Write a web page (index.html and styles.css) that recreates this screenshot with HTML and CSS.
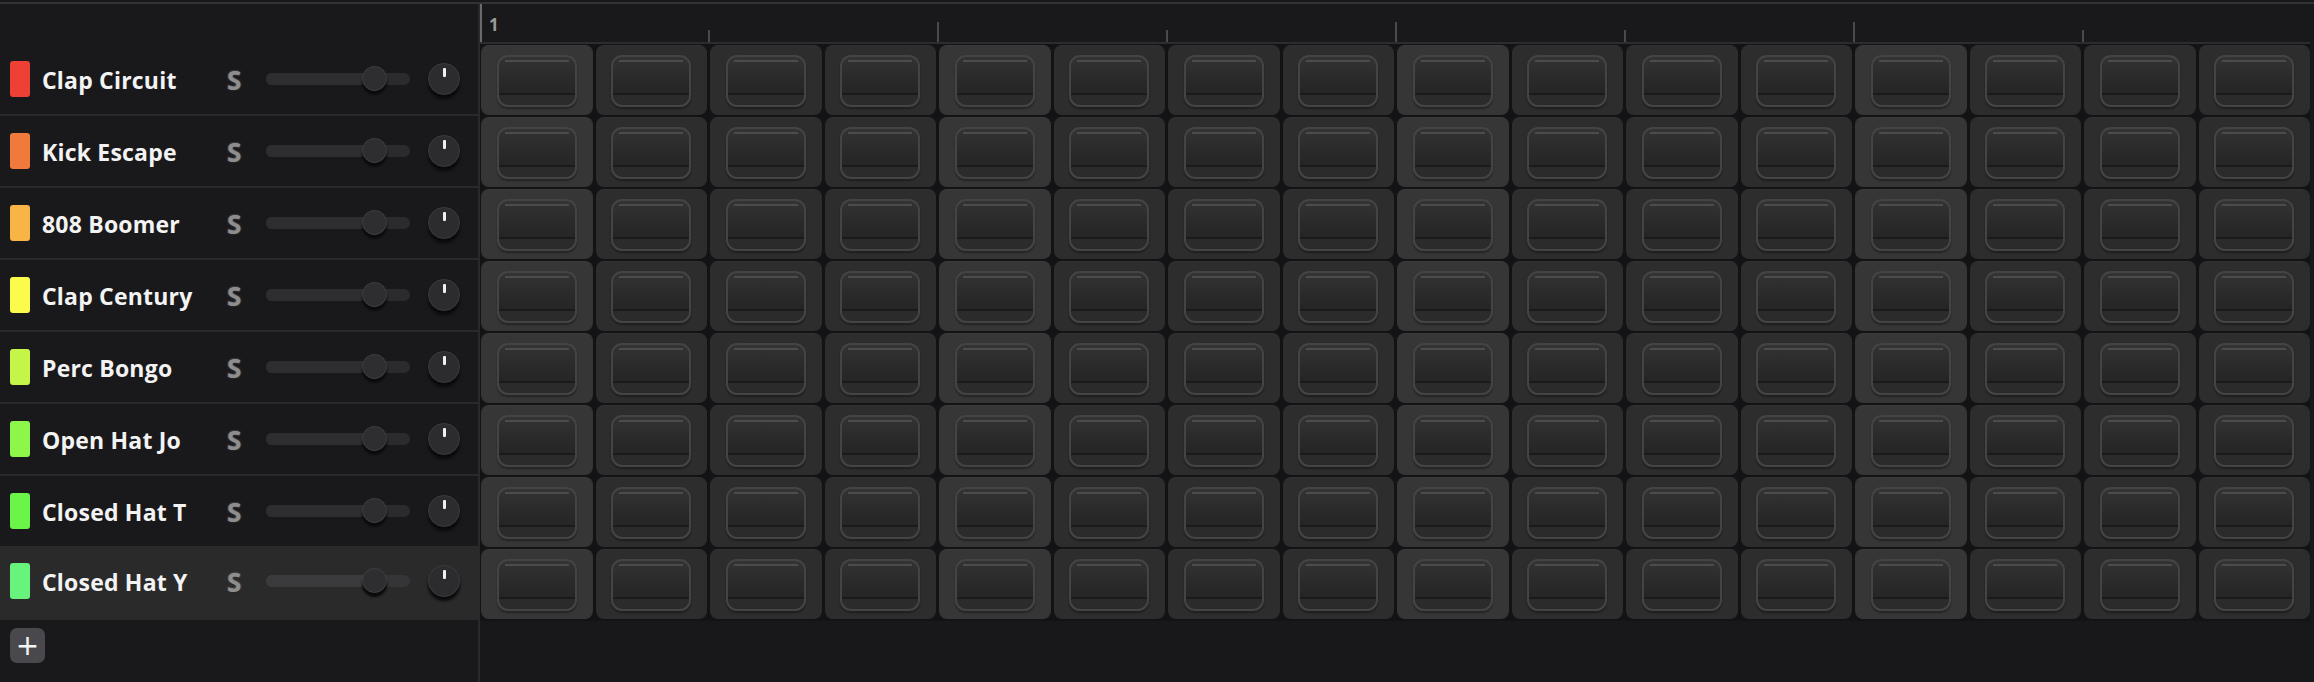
FILE: index.html
```html
<!DOCTYPE html>
<html>
<head>
<meta charset="utf-8">
<link rel="stylesheet" href="styles.css">
</head>
<body>
<div class="app">
  <aside class="sidebar">
    <div class="side-head"></div>
    <div class="tracks">
      <div class="track"><span class="chip" style="background:#ee4035"></span><span class="name">Clap Circuit</span><span class="solo">S</span><div class="slider"><div class="fill"></div><div class="thumb"></div></div><div class="pan"></div></div>
      <div class="track"><span class="chip" style="background:#f07a3c"></span><span class="name">Kick Escape</span><span class="solo">S</span><div class="slider"><div class="fill"></div><div class="thumb"></div></div><div class="pan"></div></div>
      <div class="track"><span class="chip" style="background:#f8b445"></span><span class="name">808 Boomer</span><span class="solo">S</span><div class="slider"><div class="fill"></div><div class="thumb"></div></div><div class="pan"></div></div>
      <div class="track"><span class="chip" style="background:#fbfb4c"></span><span class="name">Clap Century</span><span class="solo">S</span><div class="slider"><div class="fill"></div><div class="thumb"></div></div><div class="pan"></div></div>
      <div class="track"><span class="chip" style="background:#c6f54a"></span><span class="name">Perc Bongo</span><span class="solo">S</span><div class="slider"><div class="fill"></div><div class="thumb"></div></div><div class="pan"></div></div>
      <div class="track"><span class="chip" style="background:#8ef54b"></span><span class="name">Open Hat Jo</span><span class="solo">S</span><div class="slider"><div class="fill"></div><div class="thumb"></div></div><div class="pan"></div></div>
      <div class="track"><span class="chip" style="background:#6cf549"></span><span class="name">Closed Hat T</span><span class="solo">S</span><div class="slider"><div class="fill"></div><div class="thumb"></div></div><div class="pan"></div></div>
      <div class="track selected"><span class="chip" style="background:#68f37c"></span><span class="name">Closed Hat Y</span><span class="solo">S</span><div class="slider"><div class="fill"></div><div class="thumb"></div></div><div class="pan"></div></div>
    </div>
    <div class="add-wrap"><button class="add">+</button></div>
  </aside>
  <main class="main">
    <div class="ruler" id="ruler"></div>
    <div class="grid" id="grid"></div>
  </main>
</div>
<script src="script.js"></script>
</body>
</html>
```
FILE: script.js
```js
(function () {
  var ruler = document.getElementById('ruler');
  for (var i = 0; i < 16; i++) {
    var c = document.createElement('div');
    c.className = 'rcell';
    if (i === 0) { c.classList.add('start'); c.textContent = '1'; }
    else if (i % 4 === 0) c.classList.add('beat');
    else if (i % 2 === 0) c.classList.add('half');
    ruler.appendChild(c);
  }
  var grid = document.getElementById('grid');
  for (var r = 0; r < 8; r++) {
    for (var k = 0; k < 16; k++) {
      var p = document.createElement('div');
      p.className = 'pad' + (k % 4 === 0 ? ' accent' : '');
      var b = document.createElement('div');
      b.className = 'btn';
      p.appendChild(b);
      grid.appendChild(p);
    }
  }
})();
```
FILE: styles.css
```css
* { box-sizing: border-box; }
html, body {
  margin: 0;
  padding: 0;
  background: #18181a;
  width: 2314px;
  height: 682px;
  overflow: hidden;
  font-family: "Open Sans", "DejaVu Sans", sans-serif;
}
.app {
  display: flex;
  margin-top: 2px;
  border-top: 2px solid #323234;
  height: 680px;
}
.sidebar {
  width: 480px;
  flex: none;
  border-right: 2px solid #29292b;
  background: #19191b;
  display: flex;
  flex-direction: column;
}
.side-head { height: 40px; }
.track {
  height: 72px;
  display: flex;
  align-items: center;
  padding-left: 10px;
  border-bottom: 2px solid #2a2a2c;
}
.track.selected { background: #2a2a2b; border-bottom-color: transparent; margin-top: -2px; height: 74px; padding-bottom: 2px; }
.chip {
  width: 20px;
  height: 36px;
  border-radius: 3px;
  flex: none;
}
.name {
  margin-left: 12px;
  width: 185px;
  color: #f3f3f3;
  font-weight: 700;
  font-size: 23px;
  letter-spacing: 0.2px;
  line-height: 30px;
  padding-top: 2px;
  white-space: nowrap;
}
.solo {
  width: 39px;
  color: #8e8e8e;
  font-weight: 700;
  font-size: 26px;
  line-height: 30px;
  padding-top: 2px;
  text-shadow: 0 0 2px #8e8e8e, 0 1px 1px #000;
}
.slider {
  position: relative;
  width: 144px;
  height: 12px;
  border-radius: 6px;
  background: #2b2b2d;
}
.selected .slider { background: #353537; }
.fill {
  width: 108px;
  height: 12px;
  border-radius: 6px 0 0 6px;
  background: #2e2e30;
}
.selected .fill { background: #3b3b3d; }
.thumb {
  position: absolute;
  left: 96px;
  top: -7px;
  width: 25px;
  height: 25px;
  border-radius: 50%;
  background: #2e2e31;
  border: 1px solid #404044;
  box-shadow: 0 4px 2px #0b0b0c;
}
.pan {
  position: relative;
  margin-left: 18px;
  width: 32px;
  height: 32px;
  border-radius: 50%;
  background: #2c2c2f;
  border: 1px solid #3c3c40;
  box-shadow: 0 4px 3px #0a0a0b;
}
.pan::after {
  content: "";
  position: absolute;
  left: 13.5px;
  top: 4px;
  width: 3px;
  height: 9px;
  background: #f0f0f0;
  border-radius: 1px;
}
.add-wrap { padding: 8px 0 0 10px; }
.add {
  width: 35px;
  height: 35px;
  border: none;
  border-radius: 7px;
  background: #49494d;
  color: #f4f4f4;
  font-family: "DejaVu Sans", sans-serif;
  font-size: 28px;
  line-height: 33px;
  padding: 0;
  text-align: center;
}
.main {
  flex: none;
  width: 1830px;
  display: flex;
  flex-direction: column;
}
.ruler {
  height: 40px;
  display: grid;
  grid-template-columns: repeat(16, 1fr);
  column-gap: 3px;
  border-bottom: 2px solid #2c2c2e;
  padding-left: 1px;
  background: #19191b;
}
.rcell {
  position: relative;
  height: 38px;
}
.rcell.start {
  border-left: 2px solid #6a6a6c;
  margin-left: -1px;
  color: #9a9a9a;
  font-size: 17px;
  font-weight: 700;
  line-height: 20px;
  padding: 11px 0 0 7px;
}
.rcell.beat::before,
.rcell.half::before {
  content: "";
  position: absolute;
  left: -2px;
  bottom: 0;
  width: 2px;
  background: #4a4a4c;
}
.rcell.beat::before { height: 20px; }
.rcell.half::before { height: 12px; }
.grid {
  display: grid;
  grid-template-columns: repeat(16, 1fr);
  grid-auto-rows: 70px;
  column-gap: 3px;
  row-gap: 2px;
  padding: 1px 0 2px 1px;
  background: #131315;
}
.pad {
  background: #2d2d2e;
  border-radius: 8px;
  border-top: 1px solid #313132;
  padding-top: 9px;
  display: flex;
  justify-content: center;
}
.pad.accent { background: #363637; border-top-color: #3b3b3c; }
.btn {
  position: relative;
  width: 80px;
  height: 52px;
  border: 2px solid #444446;
  border-radius: 11px;
  background: linear-gradient(to bottom, #333334 0%, #2a2a2b 45%, #252526 76%, #1a1a1b 76%, #1a1a1b 80%, #2b2b2c 80%, #2b2b2c 100%);
  box-shadow: 0 2px 2px rgba(0, 0, 0, 0.35);
}
.btn::before {
  content: "";
  position: absolute;
  left: 6px;
  right: 6px;
  top: 3px;
  height: 2px;
  background: #4c4c4d;
}
```
